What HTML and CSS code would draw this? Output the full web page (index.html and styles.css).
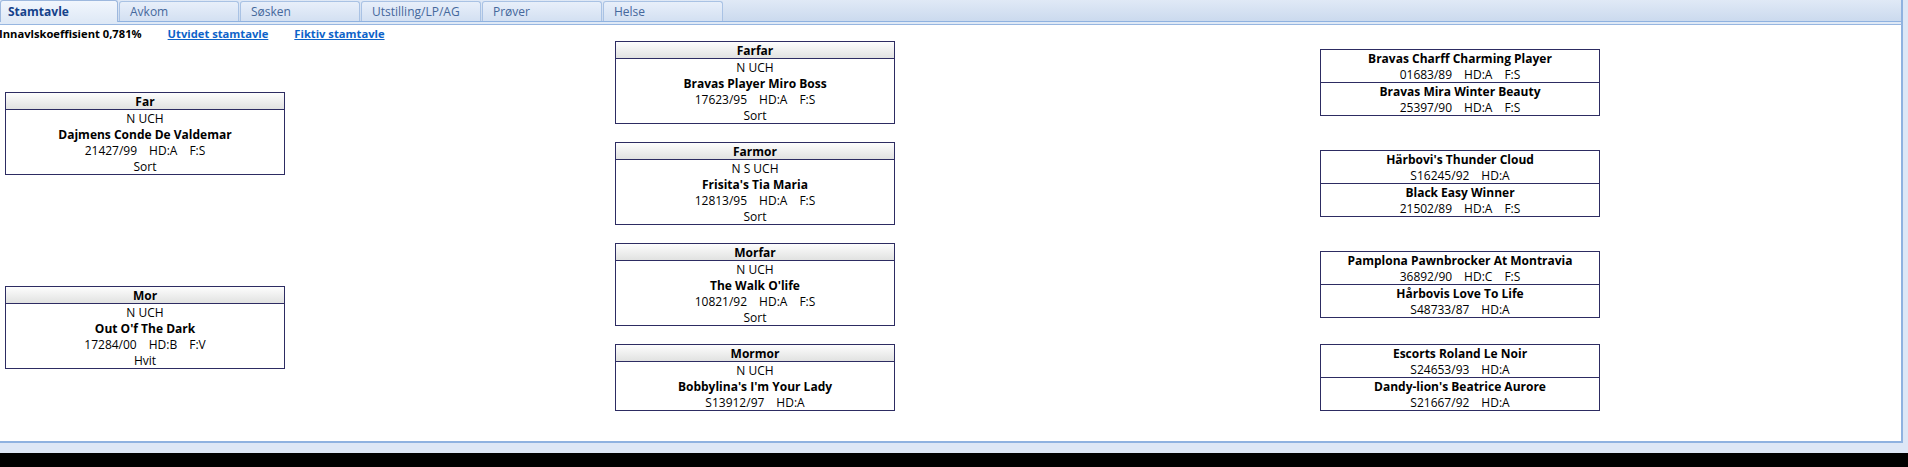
FILE: index.html
```html
<!DOCTYPE html>
<html lang="no">
<head>
<meta charset="utf-8">
<title>Stamtavle</title>
<link rel="stylesheet" href="styles.css">
</head>
<body>
<div class="window">
  <div class="tabcontrol">
    <div class="tabstrip">
      <div class="tab active">Stamtavle</div>
      <div class="tab">Avkom</div>
      <div class="tab">Søsken</div>
      <div class="tab">Utstilling/LP/AG</div>
      <div class="tab">Prøver</div>
      <div class="tab">Helse</div>
    </div>
    <div class="band"></div>
    <div class="content">
      <div class="info">
        <span class="coef">Innavlskoeffisient 0,781%</span>
        <a class="link" href="#">Utvidet stamtavle</a>
        <a class="link" href="#">Fiktiv stamtavle</a>
      </div>
      <div class="pedigree">
        <div class="box far">
          <div class="hdr">Far</div>
          <div class="line">N UCH</div>
          <div class="line name">Dajmens Conde De Valdemar</div>
          <div class="line reg"><span>21427/99</span><span>HD:A</span><span>F:S</span></div>
          <div class="line">Sort</div>
        </div>
        <div class="box mor">
          <div class="hdr">Mor</div>
          <div class="line">N UCH</div>
          <div class="line name">Out O'f The Dark</div>
          <div class="line reg"><span>17284/00</span><span>HD:B</span><span>F:V</span></div>
          <div class="line">Hvit</div>
        </div>

        <div class="box gp r1">
          <div class="hdr">Farfar</div>
          <div class="line">N UCH</div>
          <div class="line name">Bravas Player Miro Boss</div>
          <div class="line reg"><span>17623/95</span><span>HD:A</span><span>F:S</span></div>
          <div class="line">Sort</div>
        </div>
        <div class="box gp r2">
          <div class="hdr">Farmor</div>
          <div class="line">N S UCH</div>
          <div class="line name">Frisita's Tia Maria</div>
          <div class="line reg"><span>12813/95</span><span>HD:A</span><span>F:S</span></div>
          <div class="line">Sort</div>
        </div>
        <div class="box gp r3">
          <div class="hdr">Morfar</div>
          <div class="line">N UCH</div>
          <div class="line name">The Walk O'life</div>
          <div class="line reg"><span>10821/92</span><span>HD:A</span><span>F:S</span></div>
          <div class="line">Sort</div>
        </div>
        <div class="box gp r4">
          <div class="hdr">Mormor</div>
          <div class="line">N UCH</div>
          <div class="line name">Bobbylina's I'm Your Lady</div>
          <div class="line reg"><span>S13912/97</span><span>HD:A</span></div>
        </div>

        <div class="box ggp r1">
          <div class="sec">
            <div class="line name">Bravas Charff Charming Player</div>
            <div class="line reg"><span>01683/89</span><span>HD:A</span><span>F:S</span></div>
          </div>
          <div class="sec">
            <div class="line name">Bravas Mira Winter Beauty</div>
            <div class="line reg"><span>25397/90</span><span>HD:A</span><span>F:S</span></div>
          </div>
        </div>
        <div class="box ggp r2">
          <div class="sec">
            <div class="line name">Härbovi's Thunder Cloud</div>
            <div class="line reg"><span>S16245/92</span><span>HD:A</span></div>
          </div>
          <div class="sec">
            <div class="line name">Black Easy Winner</div>
            <div class="line reg"><span>21502/89</span><span>HD:A</span><span>F:S</span></div>
          </div>
        </div>
        <div class="box ggp r3">
          <div class="sec">
            <div class="line name">Pamplona Pawnbrocker At Montravia</div>
            <div class="line reg"><span>36892/90</span><span>HD:C</span><span>F:S</span></div>
          </div>
          <div class="sec">
            <div class="line name">Hårbovis Love To Life</div>
            <div class="line reg"><span>S48733/87</span><span>HD:A</span></div>
          </div>
        </div>
        <div class="box ggp r4">
          <div class="sec">
            <div class="line name">Escorts Roland Le Noir</div>
            <div class="line reg"><span>S24653/93</span><span>HD:A</span></div>
          </div>
          <div class="sec">
            <div class="line name">Dandy-lion's Beatrice Aurore</div>
            <div class="line reg"><span>S21667/92</span><span>HD:A</span></div>
          </div>
        </div>
      </div>
    </div>
  </div>
</div>
</body>
</html>
```

FILE: styles.css
```css
html, body {
  margin: 0;
  padding: 0;
  background: #000;
}

body {
  font-family: "Open Sans", "Noto Sans", sans-serif;
  font-size: 12px;
  color: #000;
  height: 467px;
  overflow: hidden;
}

.window {
  height: 453px;
  background: #dde7f6;
}

.tabcontrol {
  width: 1903px;
}

.tabstrip {
  height: 21px;
  border-bottom: 1px solid #8fb2e0;
  background: linear-gradient(#e0e9f6, #cbdaee);
  display: flex;
  align-items: flex-end;
  gap: 1px;
  border-right: 2px solid #8fb2e0;
  box-sizing: content-box;
}

.tab {
  width: 120px;
  height: 20px;
  box-sizing: border-box;
  border: 1px solid #a9c2e4;
  border-bottom: none;
  border-radius: 3px 3px 0 0;
  background: linear-gradient(#e8effa, #d3e0f2);
  color: #45689c;
  font-size: 12px;
  line-height: 20px;
  padding-left: 10px;
  white-space: nowrap;
}

.tab.active {
  width: 118px;
  height: 22px;
  margin-bottom: -1px;
  border-color: #9db8de;
  background: linear-gradient(#f1f6fd, #dfe9f6);
  color: #15428b;
  font-weight: 700;
  padding-left: 7px;
  line-height: 22px;
  position: relative;
}

.band {
  height: 2px;
  background: #dfe9f6;
  border-right: 2px solid #8fb2e0;
}

.content {
  height: 416px;
  background: #fff;
  border-top: 1px solid #97b6e0;
  border-right: 2px solid #8fb2e0;
  border-bottom: 2px solid #8fb2e0;
}

.info {
  height: 16px;
  line-height: 17px;
  display: flex;
  gap: 26px;
  font-weight: 700;
  font-size: 11.2px;
  margin-left: -1px;
  white-space: nowrap;
}

.link {
  color: #0d63c9;
  text-decoration: underline;
}

.pedigree {
  display: grid;
  grid-template-columns: 610px 705px 280px;
  grid-template-rows: auto auto auto auto;
  row-gap: 18px;
  padding-left: 5px;
}

.box {
  width: 280px;
  box-sizing: border-box;
  border: 1px solid #2d2c62;
  background: #fff;
  text-align: center;
  align-self: center;
}

.far { grid-column: 1; grid-row: 1 / span 2; }
.mor { grid-column: 1; grid-row: 3 / span 2; }
.gp { grid-column: 2; }
.ggp { grid-column: 3; }
.r1 { grid-row: 1; }
.r2 { grid-row: 2; }
.r3 { grid-row: 3; }
.r4 { grid-row: 4; }

.hdr {
  height: 16px;
  line-height: 17px;
  font-weight: 700;
  background: linear-gradient(#fdfdfd, #e1e2e1);
  border-bottom: 1px solid #2d2c62;
}

.line {
  height: 16px;
  line-height: 17px;
  white-space: nowrap;
}

.name {
  font-weight: 700;
}

.reg {
  display: flex;
  justify-content: center;
  gap: 12px;
}

.sec + .sec {
  border-top: 1px solid #2d2c62;
}
```
